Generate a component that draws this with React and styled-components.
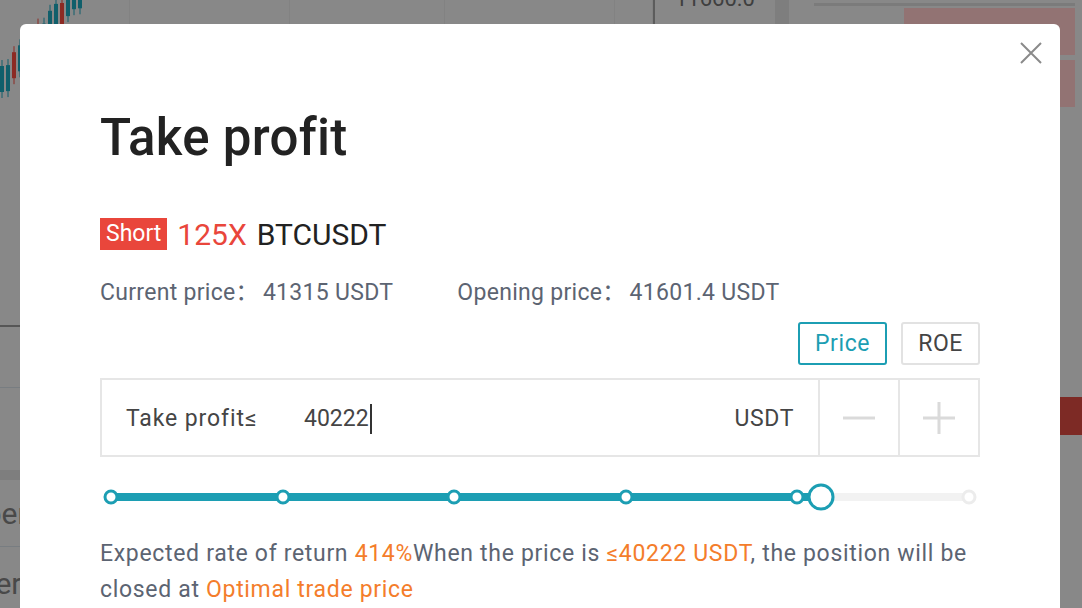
import React from "react";
import styled, { createGlobalStyle } from "styled-components";

const GlobalStyle = createGlobalStyle`
  html, body {
    margin: 0;
    padding: 0;
    width: 1082px;
    height: 608px;
    overflow: hidden;
  }
  body {
    font-family: Roboto, "Noto Sans", "Noto Sans CJK SC", sans-serif;
  }
`;

const teal = "#1c9eb3";
const orange = "#f47d2b";
const red = "#e9463b";
const grayText = "#5c6472";

/* ---------- trading page behind the dialog ---------- */

const Page = styled.div`
  position: relative;
  width: 1082px;
  height: 608px;
  overflow: hidden;
  background: #e3e3e3;
  display: flex;
`;

const ChartColumn = styled.div`
  width: 653px;
  display: flex;
  flex-direction: column;
`;

const Chart = styled.div`
  height: 325px;
  flex-shrink: 0;
  border-bottom: 2px solid #8f8f8f;
  display: grid;
  grid-template-columns: 130px 160px 155px 170px 1fr;
`;

const GridCell = styled.div`
  border-right: 1px solid #d9d9d9;
  overflow: hidden;
`;

const ChartRow = styled.div`
  height: ${(p) => p.h}px;
  flex-shrink: 0;
  border-bottom: ${(p) => (p.strong ? "10px solid #d2d2d2" : "1px solid #c9d0d8")};
  font-size: 30px;
  color: #7a7a7a;
  display: flex;
  align-items: center;
  text-indent: ${(p) => p.indent || 0}px;
  overflow: hidden;
  white-space: nowrap;
`;

const PriceAxis = styled.div`
  width: 122px;
  box-sizing: border-box;
  border-left: 2px solid #9a9a9a;
  font-size: 22px;
  color: #6a6a6a;
  padding-left: 20px;
  margin-top: -14px;
`;

const Divider = styled.div`
  width: 14px;
  background: #d2d2d2;
`;

const Book = styled.div`
  flex: 1;
  padding: 3px 7px 0 25px;
  display: flex;
  flex-direction: column;
`;

const BookLine = styled.div`
  height: 3px;
  background: #cdcdcd;
  margin-bottom: 2px;
`;

const AskBox = styled.div`
  margin: 0 0 5px 90px;
  height: 47px;
  background: #f4c0c0;
`;

const SellBar = styled.div`
  margin: 285px -7px 0 245px;
  height: 38px;
  background: #d1463f;
`;

const Overlay = styled.div`
  position: absolute;
  inset: 0;
  background: rgba(0, 0, 0, 0.4);
`;

const Candles = () => {
  const data = Array.from({ length: 14 }, (_, i) => {
    const x = i * 6;
    const mid = 80 - x * 1.15 + (i % 3 === 1 ? 6 : 0);
    const c = i % 4 === 2 ? red : teal;
    return [x, mid - 14, mid + 12, c];
  });
  return (
    <svg width="130" height="120" viewBox="0 0 130 120">
      {data.map(([x, y1, y2, c], i) => (
        <g key={i}>
          <line x1={x + 2} y1={y1 - 6} x2={x + 2} y2={y2 + 6} stroke={c} strokeWidth="1" />
          <rect x={x} y={y1} width="4" height={y2 - y1} fill={c} />
        </g>
      ))}
    </svg>
  );
};

/* ---------- dialog ---------- */

const Modal = styled.div`
  position: absolute;
  left: 20px;
  top: 24px;
  width: 1040px;
  height: 640px;
  box-sizing: border-box;
  padding: 84px 80px 0;
  background: #fff;
  border-radius: 6px;
`;

const CloseButton = styled.button`
  position: absolute;
  top: 17px;
  right: 17px;
  width: 24px;
  height: 24px;
  padding: 0;
  border: 0;
  background: none;
  display: flex;
`;

const Title = styled.h1`
  margin: 0;
  font-size: 51px;
  line-height: 60px;
  font-weight: 500;
  letter-spacing: 0.3px;
  color: #222;
`;

const SymbolRow = styled.div`
  margin-top: 50px;
  height: 32px;
  display: flex;
  align-items: center;
  gap: 10px;
  font-size: 30px;
  color: #222;
`;

const SideBadge = styled.span`
  height: 32px;
  line-height: 32px;
  padding: 0 6px;
  background: ${red};
  color: #fff;
  font-size: 23px;
`;

const Leverage = styled.span`
  color: ${red};
`;

const PriceRow = styled.div`
  margin-top: 28px;
  display: flex;
  gap: 64px;
  font-size: 23px;
  line-height: 30px;
  letter-spacing: 0.3px;
  color: ${grayText};
`;

const PriceItem = styled.span`
  display: flex;
  gap: 4px;
`;

const ModeRow = styled.div`
  margin-top: 14px;
  display: flex;
  justify-content: flex-end;
  gap: 14px;
`;

const ModeButton = styled.button`
  height: 43px;
  padding: 0 15px;
  box-sizing: border-box;
  border: 2px solid ${(p) => (p.active ? teal : "#e2e2e2")};
  border-radius: 3px;
  background: #fff;
  color: ${(p) => (p.active ? teal : "#444")};
  font-family: inherit;
  font-size: 23px;
  letter-spacing: 0.6px;
`;

const InputBox = styled.div`
  margin-top: 13px;
  height: 79px;
  box-sizing: border-box;
  border: 2px solid #e6e6e6;
  display: flex;
`;

const Field = styled.div`
  flex: 1;
  display: flex;
  align-items: center;
  padding: 2px 24px 0;
  font-size: 23px;
  color: #454545;
`;

const FieldLabel = styled.span`
  width: 178px;
  letter-spacing: 0.9px;
`;

const FieldValue = styled.span`
  flex: 1;
  display: flex;
  align-items: center;
`;

const Caret = styled.span`
  width: 2px;
  height: 30px;
  margin-left: 1px;
  background: #333;
`;

const Unit = styled.span`
  letter-spacing: 0.6px;
`;

const Stepper = styled.button`
  width: 80px;
  border: 0;
  border-left: 2px solid #e6e6e6;
  background: #fff;
  padding: 0;
  display: flex;
  align-items: center;
  justify-content: center;
`;

const Slider = styled.div`
  margin-top: 25px;
  height: 30px;
  padding: 0 11px;
  display: flex;
  align-items: center;
`;

const Track = styled.div`
  position: relative;
  flex: 1;
  height: 8px;
  background: #f2f2f2;
  border-radius: 4px;
`;

const Fill = styled.div`
  height: 100%;
  background: ${teal};
  border-radius: 4px;
`;

const Mark = styled.span`
  position: absolute;
  top: 50%;
  width: 15px;
  height: 15px;
  box-sizing: border-box;
  border: 3px solid ${(p) => (p.on ? teal : "#ececec")};
  border-radius: 50%;
  background: #fff;
  transform: translate(-50%, -50%);
`;

const Handle = styled.span`
  position: absolute;
  top: 50%;
  width: 27px;
  height: 27px;
  box-sizing: border-box;
  border: 3px solid ${teal};
  border-radius: 50%;
  background: #fff;
  transform: translate(-50%, -50%);
`;

const Note = styled.p`
  margin: 24px 0 0;
  font-size: 23px;
  line-height: 36px;
  letter-spacing: 0.68px;
  color: ${grayText};
`;

const Hi = styled.span`
  color: ${orange};
`;

const marks = [0, 20, 40, 60, 80, 100];
const value = 82.7;

const App = () => {
  return (
    <>
      <GlobalStyle />
      <Page>
        <ChartColumn>
          <Chart>
            <GridCell>
              <Candles />
            </GridCell>
            <GridCell />
            <GridCell />
            <GridCell />
            <GridCell />
          </Chart>
          <ChartRow h={60} />
          <ChartRow h={82} strong />
          <ChartRow h={66} indent={-36}>
            Open
          </ChartRow>
          <ChartRow h={72} indent={-52}>
            Order
          </ChartRow>
        </ChartColumn>
        <PriceAxis>11660.0</PriceAxis>
        <Divider />
        <Book>
          <BookLine />
          <AskBox />
          <AskBox />
          <SellBar />
        </Book>
        <Overlay />

        <Modal>
          <CloseButton aria-label="Close">
            <svg width="24" height="24" viewBox="0 0 24 24">
              <path d="M2 2 L22 22 M22 2 L2 22" stroke="#8a8a8a" strokeWidth="2" fill="none" />
            </svg>
          </CloseButton>

          <Title>Take profit</Title>

          <SymbolRow>
            <SideBadge>Short</SideBadge>
            <Leverage>125X</Leverage>
            <span>BTCUSDT</span>
          </SymbolRow>

          <PriceRow>
            <PriceItem>
              <span>Current price：</span>
              <span>41315 USDT</span>
            </PriceItem>
            <PriceItem>
              <span>Opening price：</span>
              <span>41601.4 USDT</span>
            </PriceItem>
          </PriceRow>

          <ModeRow>
            <ModeButton active>Price</ModeButton>
            <ModeButton>ROE</ModeButton>
          </ModeRow>

          <InputBox>
            <Field>
              <FieldLabel>Take profit≤</FieldLabel>
              <FieldValue>
                40222
                <Caret />
              </FieldValue>
              <Unit>USDT</Unit>
            </Field>
            <Stepper aria-label="Decrease">
              <svg width="34" height="34" viewBox="0 0 34 34">
                <path d="M1 17 H33" stroke="#dadada" strokeWidth="3" />
              </svg>
            </Stepper>
            <Stepper aria-label="Increase">
              <svg width="34" height="34" viewBox="0 0 34 34">
                <path d="M1 17 H33 M17 1 V33" stroke="#dadada" strokeWidth="3" />
              </svg>
            </Stepper>
          </InputBox>

          <Slider>
            <Track>
              <Fill style={{ width: `${value}%` }} />
              {marks.map((m) => (
                <Mark key={m} on={m <= value} style={{ left: `${m}%` }} />
              ))}
              <Handle style={{ left: `${value}%` }} />
            </Track>
          </Slider>

          <Note>
            Expected rate of return <Hi>414%</Hi>When the price is{" "}
            <Hi>≤40222 USDT</Hi>, the position will be closed at{" "}
            <Hi>Optimal trade price</Hi>
          </Note>
        </Modal>
      </Page>
    </>
  );
};

export default App;
